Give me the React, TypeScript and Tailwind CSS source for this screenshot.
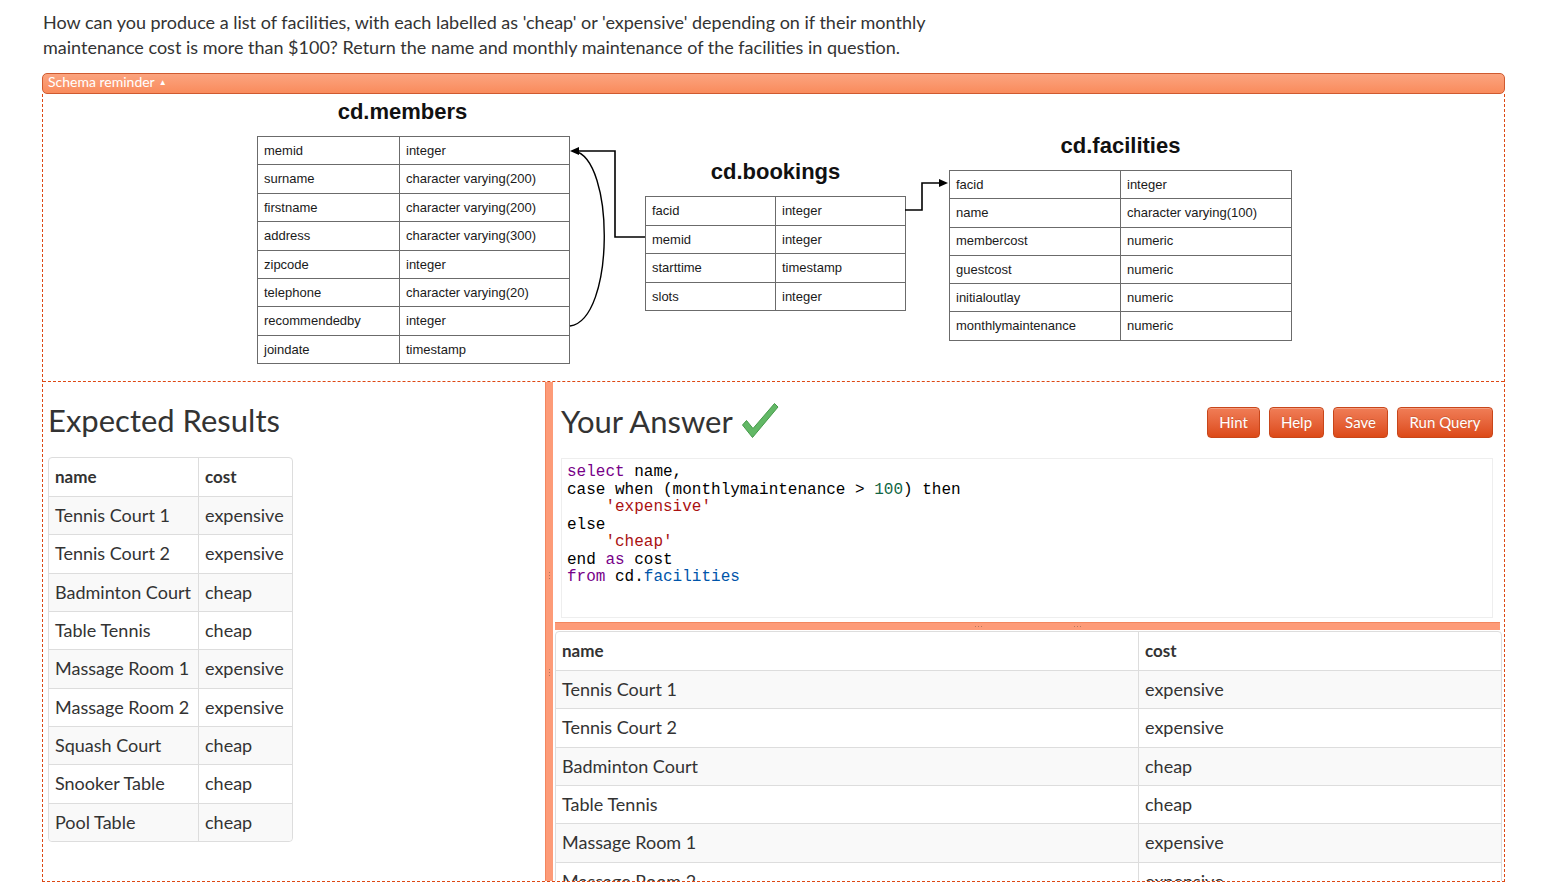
import React from 'react'

const MEMBERS: [string, string][] = [
  ['memid', 'integer'],
  ['surname', 'character varying(200)'],
  ['firstname', 'character varying(200)'],
  ['address', 'character varying(300)'],
  ['zipcode', 'integer'],
  ['telephone', 'character varying(20)'],
  ['recommendedby', 'integer'],
  ['joindate', 'timestamp'],
]

const BOOKINGS: [string, string][] = [
  ['facid', 'integer'],
  ['memid', 'integer'],
  ['starttime', 'timestamp'],
  ['slots', 'integer'],
]

const FACILITIES: [string, string][] = [
  ['facid', 'integer'],
  ['name', 'character varying(100)'],
  ['membercost', 'numeric'],
  ['guestcost', 'numeric'],
  ['initialoutlay', 'numeric'],
  ['monthlymaintenance', 'numeric'],
]

const RESULTS: [string, string][] = [
  ['Tennis Court 1', 'expensive'],
  ['Tennis Court 2', 'expensive'],
  ['Badminton Court', 'cheap'],
  ['Table Tennis', 'cheap'],
  ['Massage Room 1', 'expensive'],
  ['Massage Room 2', 'expensive'],
  ['Squash Court', 'cheap'],
  ['Snooker Table', 'cheap'],
  ['Pool Table', 'cheap'],
]

function SchemaTable({
  title,
  rows,
  pos,
  cols,
  rowH,
  titleClass = '',
}: {
  title: string
  rows: [string, string][]
  pos: string
  cols: string
  rowH: string
  titleClass?: string
}) {
  return (
    <div className={`absolute ${pos} font-['Liberation_Sans',Arial,sans-serif]`}>
      <div className={`h-[26px] leading-[26px] mb-[11px] text-center text-[22px] font-bold text-[#111] ${titleClass}`}>
        {title}
      </div>
      <div className={`grid ${cols} border-l border-t border-[#6b6b6b] text-[13px] text-[#1a1a1a]`}>
        {rows.map(([k, v]) => (
          <React.Fragment key={k}>
            <div className={`${rowH} flex items-center pl-[6px] border-r border-b border-[#6b6b6b]`}>{k}</div>
            <div className={`${rowH} flex items-center pl-[6px] border-r border-b border-[#6b6b6b]`}>{v}</div>
          </React.Fragment>
        ))}
      </div>
    </div>
  )
}

function SchemaDiagram() {
  return (
    <div className="relative h-[288px] border-b border-dashed border-[#dd4814]">
      <SchemaTable
        title="cd.members"
        rows={MEMBERS}
        pos="left-[214px] top-[5px]"
        cols="grid-cols-[142px_170px]"
        rowH="h-[28.4px]"
        titleClass="pr-[22px]"
      />
      <SchemaTable
        title="cd.bookings"
        rows={BOOKINGS}
        pos="left-[602px] top-[65px]"
        cols="grid-cols-[130px_130px]"
        rowH="h-[28.5px]"
      />
      <SchemaTable
        title="cd.facilities"
        rows={FACILITIES}
        pos="left-[906px] top-[39px]"
        cols="grid-cols-[171px_171px]"
        rowH="h-[28.3px]"
      />
      <svg className="absolute inset-0 pointer-events-none" width="1461" height="286">
        <path d="M602 143 H572 V57 H533" fill="none" stroke="#000" strokeWidth="1.6" />
        <polygon points="527,57 536,53 536,61" fill="#000" />
        <path d="M527 232 C572 226, 572 64, 531 57" fill="none" stroke="#000" strokeWidth="1.4" />
        <path d="M862 116 H879 V89 H899" fill="none" stroke="#000" strokeWidth="1.6" />
        <polygon points="905,89 896,85 896,93" fill="#000" />
      </svg>
    </div>
  )
}

function ResultTable({ width, col1, col2 }: { width: string; col1: string; col2: string }) {
  return (
    <table className={`${width} table-fixed border-separate border-spacing-0 border border-[#dddddd] rounded-[4px] text-[18px] text-[#333]`}>
      <colgroup>
        <col className={col1} />
        <col className={col2} />
      </colgroup>
      <thead>
        <tr>
          <th className="text-left font-bold text-[17px] px-[6px] py-[7px] leading-[24px]">name</th>
          <th className="text-left font-bold text-[17px] px-[6px] py-[7px] leading-[24px] border-l border-[#dddddd]">cost</th>
        </tr>
      </thead>
      <tbody>
        {RESULTS.map(([n, c], i) => {
          const bg = i % 2 === 0 ? 'bg-[#f9f9f9]' : 'bg-white'
          const last = i === RESULTS.length - 1
          return (
            <tr key={n}>
              <td className={`${bg} ${last ? 'rounded-bl-[4px]' : ''} whitespace-nowrap px-[6px] py-[7px] leading-[23.33px] border-t border-[#dddddd]`}>{n}</td>
              <td className={`${bg} ${last ? 'rounded-br-[4px]' : ''} whitespace-nowrap px-[6px] py-[7px] leading-[23.33px] border-t border-l border-[#dddddd]`}>{c}</td>
            </tr>
          )
        })}
      </tbody>
    </table>
  )
}

function Grip({ vertical }: { vertical?: boolean }) {
  return (
    <div className={`flex ${vertical ? 'flex-col' : 'flex-row'} gap-[2px]`}>
      <span className="w-px h-px bg-[#b5775d]" />
      <span className="w-px h-px bg-[#b5775d]" />
      <span className="w-px h-px bg-[#b5775d]" />
    </div>
  )
}

function Button({ label, w }: { label: string; w: string }) {
  return (
    <button className={`${w} h-[31px] rounded-[4px] border border-[#c8461a] bg-linear-to-b from-[#f07d56] to-[#dc4916] text-white text-[15px] leading-none shadow-[inset_0_1px_0_rgba(255,255,255,0.25)] [text-shadow:0_-1px_0_rgba(0,0,0,0.15)]`}>
      {label}
    </button>
  )
}

function CheckMark() {
  return (
    <svg width="38" height="37" viewBox="0 0 38 37">
      <path d="M1.5 23 L5.5 18.5 L12 26.5 L33.5 1.5 L37 5 L11.5 35.5 Z" fill="#62b866" stroke="#469a4a" strokeWidth="1" strokeLinejoin="round" />
    </svg>
  )
}

export default function App() {
  return (
    <div className="min-h-screen bg-white font-[Lato,'Noto_Sans',sans-serif] text-[#333]">
      <div className="ml-[42px] w-[1463px] pt-[10px]">
        <p className="pl-px text-[18px] leading-[25px] mb-[13px]">
          How can you produce a list of facilities, with each labelled as 'cheap' or 'expensive' depending on if their monthly
          <br />
          maintenance cost is more than $100? Return the name and monthly maintenance of the facilities in question.
        </p>

        <div className="h-[21px] rounded-[5px] border border-[#cf5a30] bg-linear-to-b from-[#fba47f] to-[#f98b5c] flex items-center pl-[5px] pb-[3px] text-white text-[14px] leading-none">
          Schema reminder <span className="ml-[4px] text-[8px]">▲</span>
        </div>

        <div className="border-l border-r border-b border-dashed border-[#dd4814]">
          <SchemaDiagram />

          <div className="flex h-[499px]">
            {/* expected */}
            <div className="w-[502px] pl-[5px] pt-[20px]">
              <h3 className="h-[36px] text-[31px] leading-[36px] font-normal">Expected Results</h3>
              <div className="mt-[19px]">
                <ResultTable width="w-[243px]" col1="w-[149px]" col2="w-[94px]" />
              </div>
            </div>

            {/* splitter */}
            <div className="w-[8px] bg-[#fd9b78] border-l border-[#f3865e] flex flex-col items-center pt-[190px] gap-[90px]">
              <Grip vertical />
              <Grip vertical />
            </div>

            {/* answer */}
            <div className="flex-1 overflow-hidden">
              <div className="flex items-start justify-between pl-[8px] pr-[11px] pt-[20px]">
                <div className="flex items-center gap-[8px]">
                  <h3 className="h-[36px] text-[31px] leading-[36px] font-normal">Your Answer</h3>
                  <CheckMark />
                </div>
                <div className="flex gap-[9px] mt-[5px]">
                  <Button label="Hint" w="w-[53px]" />
                  <Button label="Help" w="w-[55px]" />
                  <Button label="Save" w="w-[55px]" />
                  <Button label="Run Query" w="w-[96px]" />
                </div>
              </div>

              <div className="ml-[8px] mr-[11px] mt-[19px] h-[160px] border border-[#eeeeee] pt-[5px] pl-[5px]">
                <pre className="font-['Liberation_Mono',monospace] text-[16px] leading-[17.5px] text-black">
                  <span className="text-[#770088]">select</span>{' name,\n'}
                  {'case when (monthlymaintenance > '}<span className="text-[#116644]">100</span>{') then\n'}
                  {'    '}<span className="text-[#aa1111]">'expensive'</span>{'\n'}
                  {'else\n'}
                  {'    '}<span className="text-[#aa1111]">'cheap'</span>{'\n'}
                  {'end '}<span className="text-[#770088]">as</span>{' cost\n'}
                  <span className="text-[#770088]">from</span>{' cd.'}<span className="text-[#0055aa]">facilities</span>
                </pre>
              </div>

              <div className="ml-[2px] mr-[4px] mt-[4px] h-[8px] bg-[#fd9b78] border-t border-[#f3865e] flex items-center justify-center gap-[92px]">
                <Grip />
                <Grip />
              </div>

              <div className="ml-[2px] mt-px">
                <ResultTable width="w-[945px]" col1="w-[582px]" col2="w-[363px]" />
              </div>
            </div>
          </div>
        </div>
      </div>
    </div>
  )
}
